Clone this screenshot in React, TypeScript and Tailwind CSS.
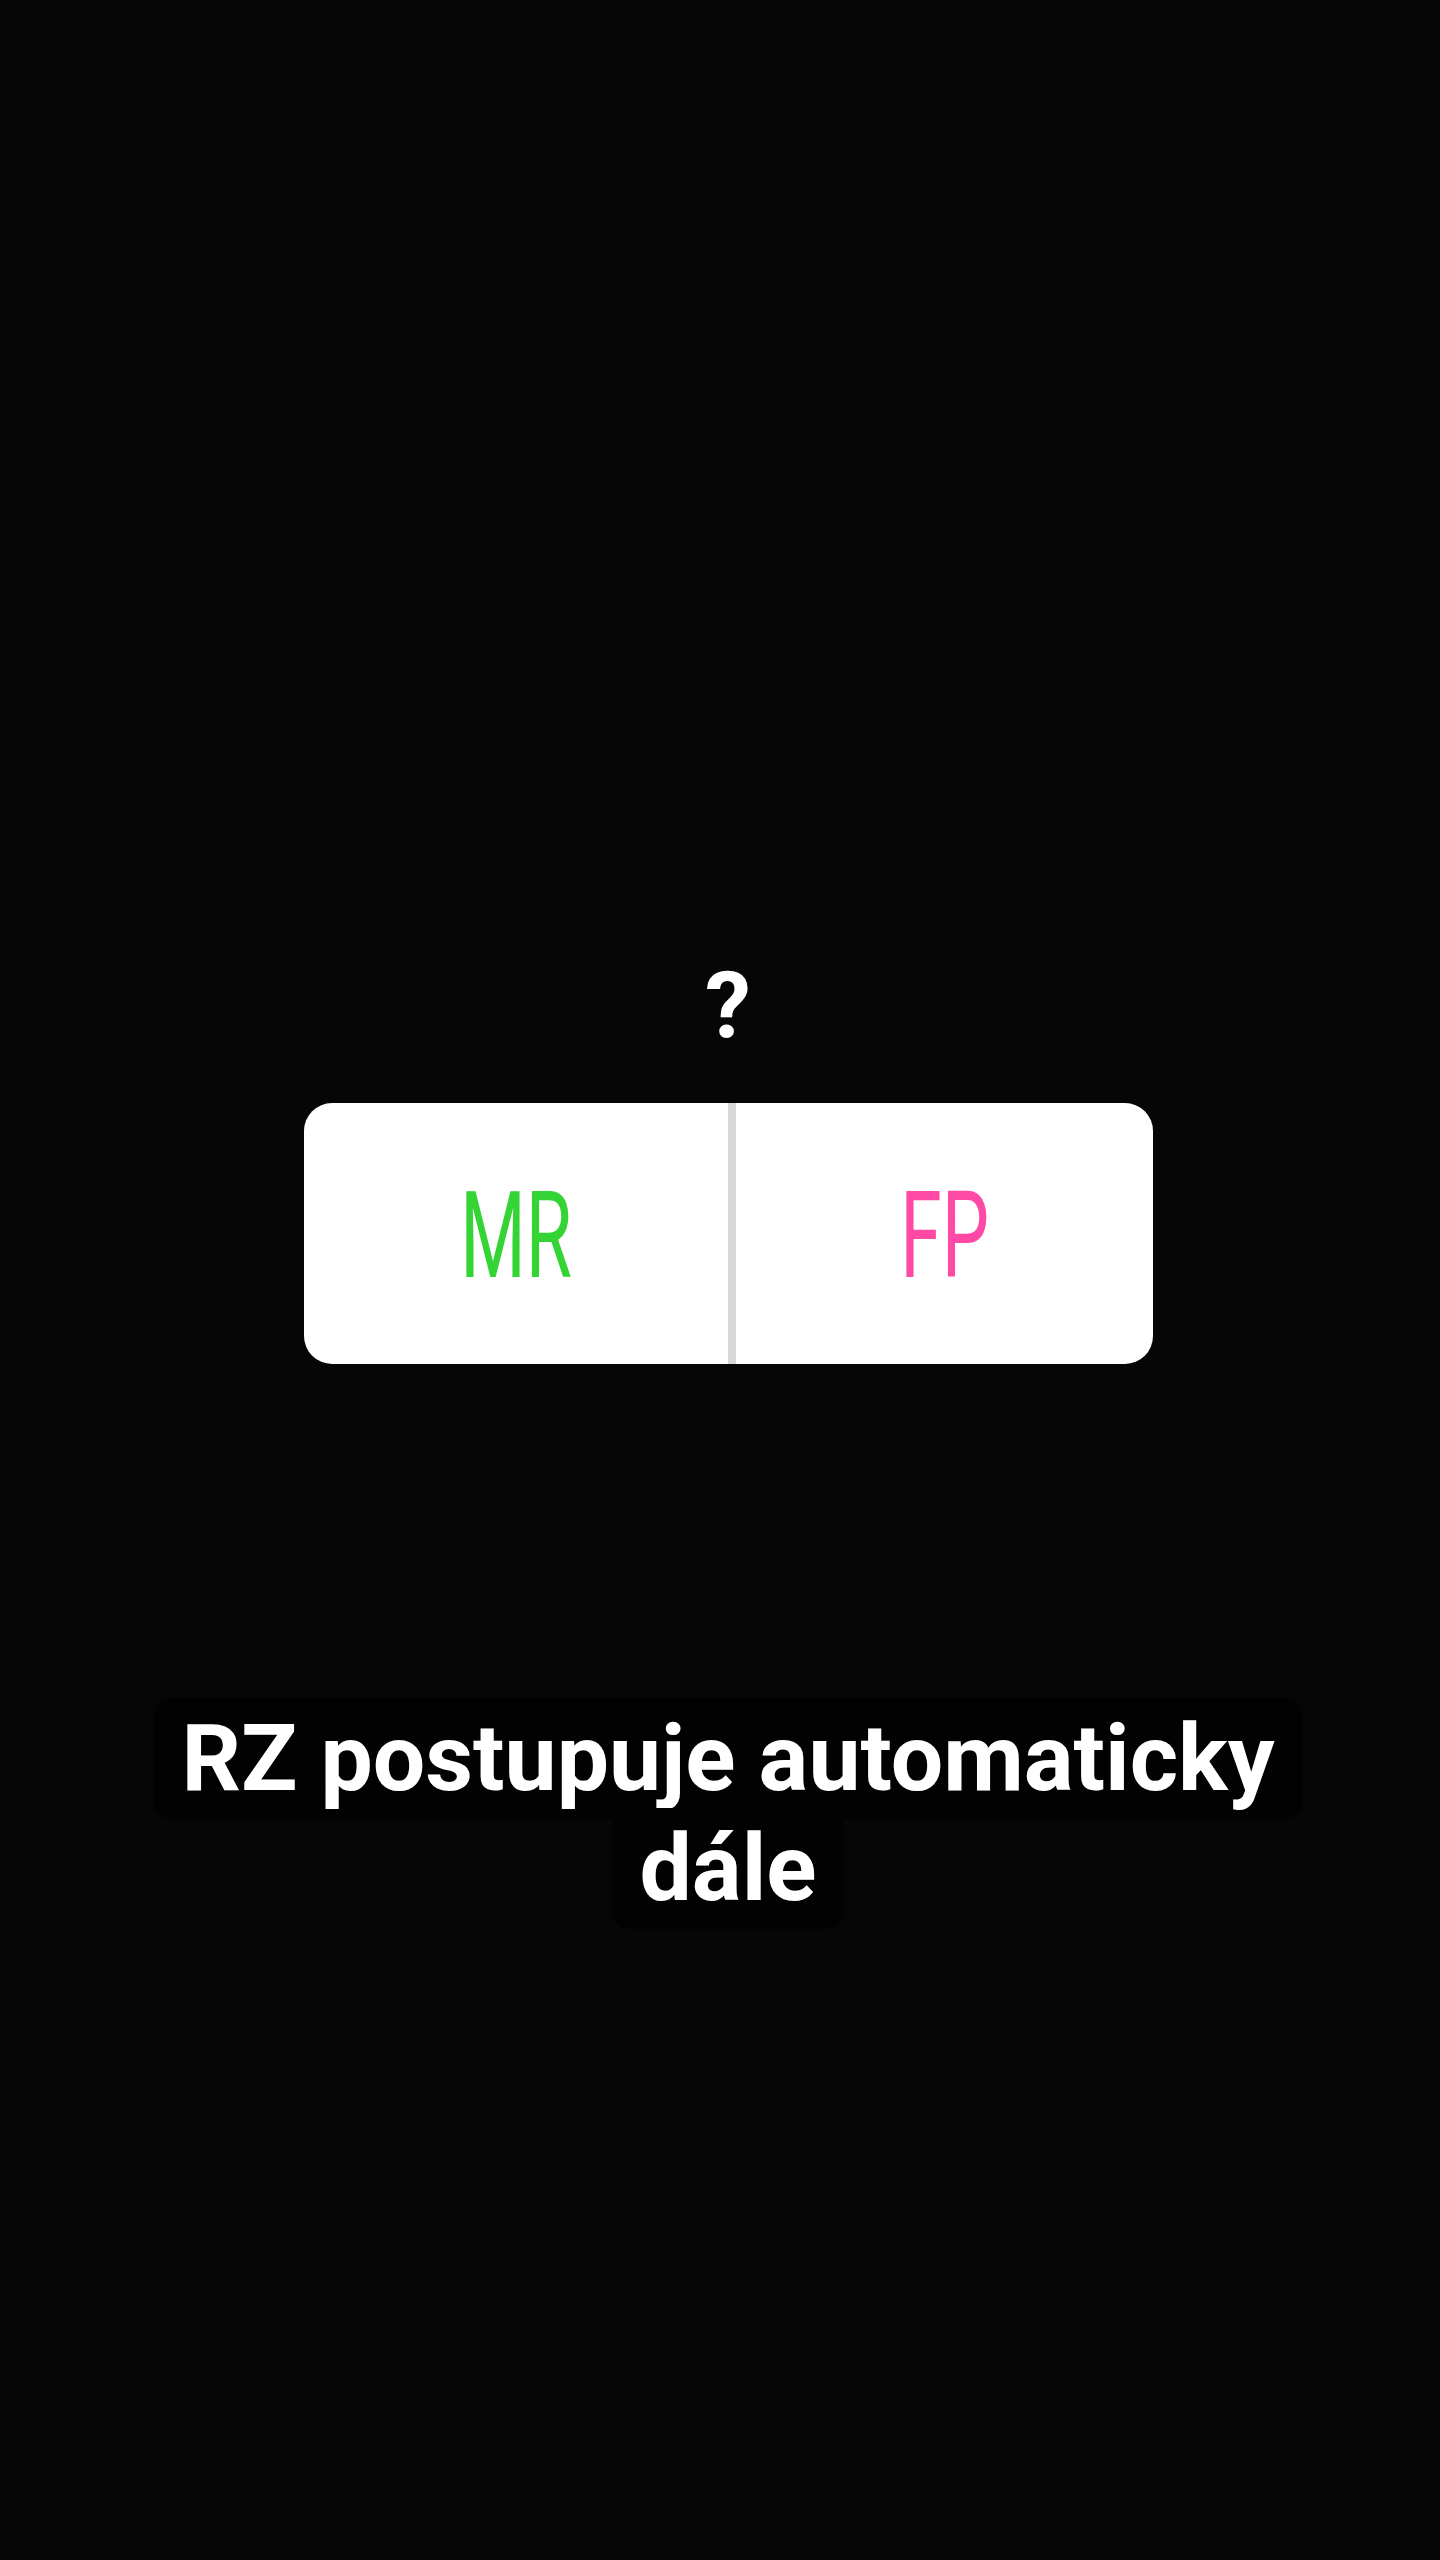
const options = [
  { label: "MR", color: "text-[#33d433]" },
  { label: "FP", color: "text-[#ff4aa5]" },
];

export default function App() {
  return (
    <div className="min-h-[2560px] w-full bg-[#060606] pl-[16px] font-['Roboto',sans-serif]">
      <div className="flex flex-col items-center pt-[960px]">
        {/* Question */}
        <div className="text-[92px] font-bold leading-none text-white">?</div>

        {/* Poll */}
        <div className="mt-[51px] flex h-[261px] w-[849px] overflow-hidden rounded-[28px] bg-white">
          {options.map((o, i) => (
            <div key={o.label} className="flex flex-1">
              {i > 0 && <div className="w-[8px] bg-[#d8d8d8]" />}
              <div className="flex flex-1 items-center justify-center pt-[6px]">
                <span
                  className={`inline-block scale-x-[0.62] text-[121px] font-normal leading-none ${o.color}`}
                >
                  {o.label}
                </span>
              </div>
            </div>
          ))}
        </div>

        {/* Caption */}
        <div className="mt-[340px] max-w-[1180px] text-center text-[93px] font-bold leading-[110px] text-white">
          <span className="box-decoration-clone rounded-[18px] bg-[#020202] px-[28px] py-[6px]">
            RZ postupuje automaticky dále
          </span>
        </div>
      </div>
    </div>
  );
}
